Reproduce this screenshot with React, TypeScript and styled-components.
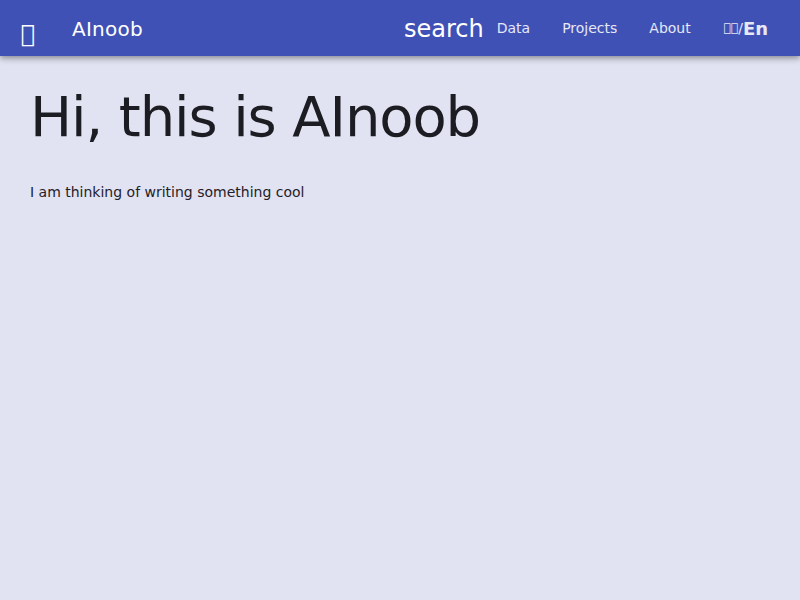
import React from "react";
import styled, { createGlobalStyle } from "styled-components";

const Global = createGlobalStyle`
  html, body { margin: 0; padding: 0; }
  body {
    background: #e1e3f2;
    font-family: "DejaVu Sans", sans-serif;
    color: #1c1d22;
    min-height: 100vh;
  }
`;

const Toolbar = styled.header`
  height: 56px;
  background: #3f51b5;
  color: #fff;
  display: flex;
  align-items: center;
  padding: 0 16px;
  box-shadow: 0 2px 4px -1px rgba(0,0,0,.2), 0 4px 5px 0 rgba(0,0,0,.14), 0 1px 10px 0 rgba(0,0,0,.12);
  position: relative;
  z-index: 2;
`;

const MenuIcon = styled.span`
  font-size: 24px;
  width: 24px;
  display: flex;
  justify-content: center;
  line-height: 24px;
  margin-top: 12px;
`;

const Title = styled.span`
  font-size: 20px;
  letter-spacing: 0.0125em;
  margin-left: 32px;
  margin-top: 1px;
`;

const Spacer = styled.div`
  flex: 1;
`;

const Search = styled.span`
  font-size: 24px;
  margin-right: -3px;
  margin-top: 2px;
`;

const NavButton = styled.button<{ $last?: boolean }>`
  background: none;
  border: none;
  color: #e6e8f6;
  font-family: "DejaVu Sans", sans-serif;
  font-size: 14px;
  padding: 0 16px 0 ${(p) => (p.$last ? "17px" : "16px")};
  height: 36px;
  min-width: 64px;
  cursor: pointer;
  display: flex;
  align-items: center;
`;

const Tofu = styled.span`
  font-size: 12px;
`;

const Bold = styled.b`
  font-size: 18px;
  font-weight: 700;
`;

const Main = styled.main`
  padding: 24px 30px;
`;

const Heading = styled.h1`
  font-size: 56px;
  font-weight: 400;
  letter-spacing: -0.02em;
  line-height: 56px;
  margin: 9px 0 0;
`;

const Text = styled.p`
  font-size: 14px;
  line-height: 20px;
  margin: 37px 0 0;
  color: #1f2028;
`;

export default function App() {
  return (
    <>
      <Global />
      <Toolbar>
        <MenuIcon>{"\uE5D2"}</MenuIcon>
        <Title>AInoob</Title>
        <Spacer />
        <Search>search</Search>
        <NavButton>Data</NavButton>
        <NavButton>Projects</NavButton>
        <NavButton>About</NavButton>
        <NavButton $last>
          <Tofu>{"\uE000\uE000"}</Tofu>/<Bold>En</Bold>
        </NavButton>
      </Toolbar>
      <Main>
        <Heading>Hi, this is AInoob</Heading>
        <Text>I am thinking of writing something cool</Text>
      </Main>
    </>
  );
}
